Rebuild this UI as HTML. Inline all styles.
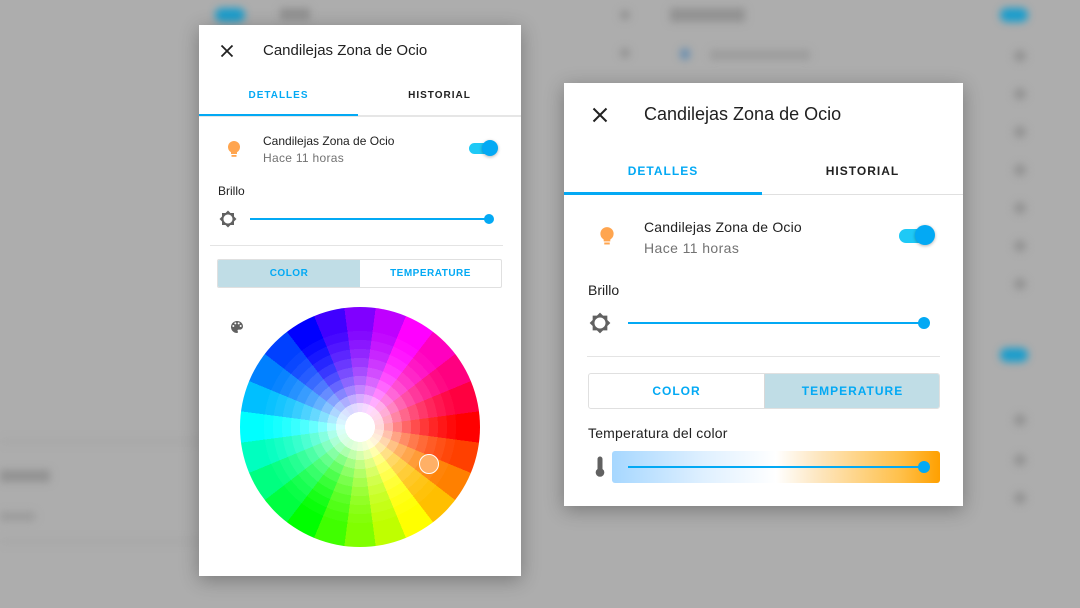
<!DOCTYPE html>
<html><head><meta charset="utf-8"><style>
*{margin:0;padding:0;box-sizing:border-box}
body{width:1080px;height:608px;background:#adadad;position:relative;overflow:hidden;font-family:"Liberation Sans",sans-serif;color:#212121}
.a{position:absolute}
.bg{filter:blur(4px)}
.dlg{background:#fff;box-shadow:0 4px 18px rgba(0,0,0,.3)}
.blue{color:#03a9f4}
.tab{font-weight:bold;letter-spacing:1px;text-align:center}
.track{height:2px;background:#03a9f4}
.knob{border-radius:50%;background:#03a9f4}
</style></head><body>
<!-- blurred background -->
<div class="a bg" style="left:215px;top:8px;width:30px;height:14px;border-radius:7px;background:#1a9dcc"></div>
<div class="a bg" style="left:280px;top:8px;width:30px;height:12px;background:#909090"></div>
<div class="a bg" style="left:620px;top:10px;width:10px;height:10px;border-radius:5px;background:#929292"></div>
<div class="a bg" style="left:620px;top:48px;width:10px;height:10px;border-radius:5px;background:#929292"></div>
<div class="a bg" style="left:670px;top:8px;width:75px;height:14px;background:#929292"></div>
<div class="a bg" style="left:680px;top:48px;width:10px;height:12px;border-radius:6px;background:#6a8faf"></div>
<div class="a bg" style="left:710px;top:50px;width:100px;height:10px;background:#9c9c9c"></div>
<div class="a bg" style="left:1000px;top:8px;width:28px;height:14px;border-radius:7px;background:#1a9dcc"></div>
<div class="a bg" style="left:1000px;top:348px;width:28px;height:14px;border-radius:7px;background:#1a9dcc"></div>
<div class="a bg" style="left:1014px;top:50px;width:12px;height:12px;border-radius:6px;background:#939393;box-shadow:0 38px 0 #939393,0 76px 0 #939393,0 114px 0 #939393,0 152px 0 #939393,0 190px 0 #939393,0 228px 0 #939393,0 364px 0 #939393,0 404px 0 #939393,0 442px 0 #939393"></div>
<div class="a bg" style="left:0;top:470px;width:50px;height:12px;background:#929292"></div>
<div class="a bg" style="left:0;top:512px;width:35px;height:9px;background:#9c9c9c"></div>
<div class="a bg" style="left:0;top:440px;width:199px;height:3px;background:#a4a4a4"></div>
<div class="a bg" style="left:0;top:540px;width:199px;height:3px;background:#a4a4a4"></div>

<!-- LEFT DIALOG -->
<div class="a dlg" style="left:199px;top:25px;width:322px;height:551px">
  <svg class="a" style="left:21px;top:19px" width="14" height="14" viewBox="0 0 14 14"><path d="M1.5 1.5L12.5 12.5M12.5 1.5L1.5 12.5" stroke="#212121" stroke-width="1.8"/></svg>
  <div class="a" style="left:64px;top:17px;font-size:15px">Candilejas Zona de Ocio</div>
  <div class="a tab blue" style="left:0;top:65px;width:159px;font-size:10px">DETALLES</div>
  <div class="a tab" style="left:159px;top:65px;width:163px;font-size:10px;color:#212121">HISTORIAL</div>
  <div class="a" style="left:0;top:90px;width:322px;height:2px;background:#e6e6e6"></div>
  <div class="a" style="left:0;top:89px;width:159px;height:2px;background:#03a9f4"></div>
  <svg class="a" style="left:27px;top:115px" width="16" height="20" viewBox="0 0 16 20"><circle cx="8" cy="7" r="6" fill="#ffa54f"/><rect x="5" y="10" width="6" height="4" fill="#ffa54f"/><rect x="5.5" y="15" width="5" height="1.8" fill="#ffa54f"/></svg>
  <div class="a" style="left:64px;top:109px;font-size:12px">Candilejas Zona de Ocio</div>
  <div class="a" style="left:64px;top:126px;font-size:12px;color:#727272;letter-spacing:.3px">Hace 11 horas</div>
  <div class="a" style="left:270px;top:118px;width:26px;height:11px;border-radius:6px;background:#1ec9f6"></div>
  <div class="a knob" style="left:283px;top:115px;width:16px;height:16px;box-shadow:0 1px 3px rgba(0,0,0,.3)"></div>
  <div class="a" style="left:19px;top:159px;font-size:12px">Brillo</div>
  <svg class="a" style="left:20px;top:185px" width="18" height="18" viewBox="0 0 24 24"><path fill="#616161" d="M20 8.69V4h-4.69L12 .69 8.69 4H4v4.69L.69 12 4 15.31V20h4.69L12 23.31 15.31 20H20v-4.69L23.31 12 20 8.69zM12 18c-3.31 0-6-2.69-6-6s2.69-6 6-6 6 2.69 6 6-2.69 6-6 6z"/></svg>
  <div class="a track" style="left:51px;top:193px;width:239px"></div>
  <div class="a knob" style="left:285px;top:189px;width:10px;height:10px"></div>
  <div class="a" style="left:11px;top:220px;width:293px;height:1px;background:#e4e4e4"></div>
  <div class="a" style="left:18px;top:234px;width:285px;height:29px;border:1px solid #e0e0e0;border-radius:2px;overflow:hidden">
    <div class="a tab blue" style="left:0;top:0;width:142px;height:27px;background:#c0dde6;line-height:27px;font-size:10px;letter-spacing:.5px">COLOR</div>
    <div class="a tab blue" style="left:142px;top:0;width:141px;height:27px;line-height:27px;font-size:10px;letter-spacing:.5px">TEMPERATURE</div>
  </div>
  <svg class="a" style="left:30px;top:294px" width="16" height="16" viewBox="0 0 24 24"><path fill="#616161" d="M12 3a9 9 0 0 0 0 18c.83 0 1.5-.67 1.5-1.5 0-.39-.15-.74-.39-1.01-.23-.26-.38-.61-.38-.99 0-.83.67-1.5 1.5-1.5H16c2.76 0 5-2.24 5-5 0-4.42-4.03-8-9-8zm-5.5 9a1.5 1.5 0 1 1 0-3 1.5 1.5 0 0 1 0 3zm3-4a1.5 1.5 0 1 1 0-3 1.5 1.5 0 0 1 0 3zm5 0a1.5 1.5 0 1 1 0-3 1.5 1.5 0 0 1 0 3zm3 4a1.5 1.5 0 1 1 0-3 1.5 1.5 0 0 1 0 3z"/></svg>
  <div class="a" style="left:41px;top:282px;width:240px;height:240px;border-radius:50%;background:conic-gradient(from -7.5deg,hsl(270,100%,50%) 0 15deg,hsl(285,100%,50%) 0 30deg,hsl(300,100%,50%) 0 45deg,hsl(315,100%,50%) 0 60deg,hsl(330,100%,50%) 0 75deg,hsl(345,100%,50%) 0 90deg,hsl(0,100%,50%) 0 105deg,hsl(15,100%,50%) 0 120deg,hsl(30,100%,50%) 0 135deg,hsl(45,100%,50%) 0 150deg,hsl(60,100%,50%) 0 165deg,hsl(75,100%,50%) 0 180deg,hsl(90,100%,50%) 0 195deg,hsl(105,100%,50%) 0 210deg,hsl(120,100%,50%) 0 225deg,hsl(135,100%,50%) 0 240deg,hsl(150,100%,50%) 0 255deg,hsl(165,100%,50%) 0 270deg,hsl(180,100%,50%) 0 285deg,hsl(195,100%,50%) 0 300deg,hsl(210,100%,50%) 0 315deg,hsl(225,100%,50%) 0 330deg,hsl(240,100%,50%) 0 345deg,hsl(255,100%,50%) 0 360deg)"></div>
  <div class="a" style="left:41px;top:282px;width:240px;height:240px;border-radius:50%;background:radial-gradient(circle closest-side,#fff 0 12.5%,rgba(255,255,255,.85) 12.5% 20%,rgba(255,255,255,.68) 20% 27.5%,rgba(255,255,255,.52) 27.5% 35%,rgba(255,255,255,.4) 35% 42.5%,rgba(255,255,255,.3) 42.5% 50%,rgba(255,255,255,.22) 50% 57.5%,rgba(255,255,255,.15) 57.5% 65%,rgba(255,255,255,.09) 65% 72.5%,rgba(255,255,255,.04) 72.5% 80%,rgba(255,255,255,0) 80%)"></div>
  <div class="a" style="left:220px;top:429px;width:20px;height:20px;border-radius:50%;border:1.5px solid #fff;background:#ffb066"></div>
</div>

<!-- RIGHT DIALOG -->
<div class="a dlg" style="left:564px;top:83px;width:399px;height:423px">
  <svg class="a" style="left:28px;top:24px" width="16" height="16" viewBox="0 0 16 16"><path d="M1.5 1.5L14.5 14.5M14.5 1.5L1.5 14.5" stroke="#212121" stroke-width="2"/></svg>
  <div class="a" style="left:80px;top:21px;font-size:18px">Candilejas Zona de Ocio</div>
  <div class="a tab blue" style="left:0;top:81px;width:198px;font-size:12px">DETALLES</div>
  <div class="a tab" style="left:198px;top:81px;width:201px;font-size:12px">HISTORIAL</div>
  <div class="a" style="left:0;top:111px;width:399px;height:1px;background:#e0e0e0"></div>
  <div class="a" style="left:0;top:109px;width:198px;height:3px;background:#03a9f4"></div>
  <svg class="a" style="left:34px;top:143px" width="18" height="22" viewBox="0 0 16 20"><circle cx="8" cy="7" r="6" fill="#ffa54f"/><rect x="5" y="10" width="6" height="4" fill="#ffa54f"/><rect x="5.5" y="15" width="5" height="1.8" fill="#ffa54f"/></svg>
  <div class="a" style="left:80px;top:136px;font-size:14px;letter-spacing:.2px">Candilejas Zona de Ocio</div>
  <div class="a" style="left:80px;top:157px;font-size:14px;color:#727272;letter-spacing:.4px">Hace 11 horas</div>
  <div class="a" style="left:335px;top:146px;width:34px;height:14px;border-radius:7px;background:#1ec9f6"></div>
  <div class="a knob" style="left:351px;top:142px;width:20px;height:20px;box-shadow:0 1px 3px rgba(0,0,0,.3)"></div>
  <div class="a" style="left:24px;top:199px;font-size:14px">Brillo</div>
  <svg class="a" style="left:25px;top:229px" width="22" height="22" viewBox="0 0 24 24"><path fill="#616161" d="M20 8.69V4h-4.69L12 .69 8.69 4H4v4.69L.69 12 4 15.31V20h4.69L12 23.31 15.31 20H20v-4.69L23.31 12 20 8.69zM12 18c-3.31 0-6-2.69-6-6s2.69-6 6-6 6 2.69 6 6-2.69 6-6 6z"/></svg>
  <div class="a track" style="left:64px;top:239px;width:296px"></div>
  <div class="a knob" style="left:354px;top:234px;width:12px;height:12px"></div>
  <div class="a" style="left:23px;top:273px;width:353px;height:1px;background:#e4e4e4"></div>
  <div class="a" style="left:24px;top:290px;width:352px;height:36px;border:1px solid #e0e0e0;border-radius:3px;overflow:hidden">
    <div class="a tab blue" style="left:0;top:0;width:175px;height:34px;line-height:34px;font-size:12px;letter-spacing:1px">COLOR</div>
    <div class="a tab blue" style="left:175px;top:0;width:176px;height:34px;background:#c0dde6;line-height:34px;font-size:12px;letter-spacing:1px;border-left:1px solid #d8d8d8">TEMPERATURE</div>
  </div>
  <div class="a" style="left:24px;top:342px;font-size:14px;letter-spacing:.2px">Temperatura del color</div>
  <svg class="a" style="left:30px;top:373px" width="12" height="22" viewBox="0 0 12 22"><path fill="#616161" d="M3.5 3a2.5 2.5 0 0 1 5 0v10a4.3 4.3 0 1 1-5 0z"/></svg>
  <div class="a" style="left:48px;top:368px;width:328px;height:32px;border-radius:3px;background:linear-gradient(90deg,#a6d7ff 0%,#dff0ff 28%,#fff 50%,#fde8c4 62%,#ffc04a 88%,#ffa000 100%)"></div>
  <div class="a track" style="left:64px;top:383px;width:296px"></div>
  <div class="a knob" style="left:354px;top:378px;width:12px;height:12px"></div>
</div>
</body></html>
